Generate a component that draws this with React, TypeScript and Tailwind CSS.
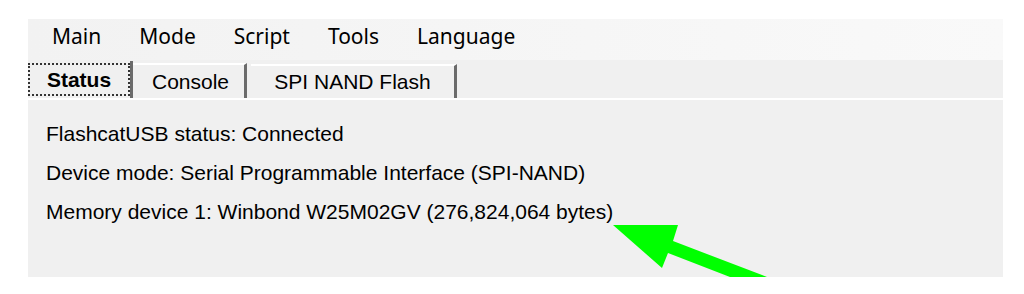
import React from 'react';

const menuItems = ['Main', 'Mode', 'Script', 'Tools', 'Language'];

const statusLines = [
  'FlashcatUSB status: Connected',
  'Device mode: Serial Programmable Interface (SPI-NAND)',
  'Memory device 1: Winbond W25M02GV (276,824,064 bytes)',
];

export default function App() {
  return (
    <div className="relative w-[1024px] h-[294px] bg-white overflow-hidden">
      <div className="ml-[28px] mt-[19px] w-[975px] h-[258px] flex flex-col bg-[#f0f0f0]">
        {/* menu strip */}
        <div className="h-[41px] flex items-center pl-[24px] pb-[6px] gap-[38px] bg-gradient-to-r from-[#f2f2f2] to-[#f9f9f9] text-[21px] text-black font-['Noto_Sans',sans-serif]">
          {menuItems.map((item) => (
            <span key={item} className="leading-none">{item}</span>
          ))}
        </div>

        {/* tab buttons */}
        <div className="h-[38px] flex items-end font-['Liberation_Sans',Arial,sans-serif] text-[21px] text-black">
          <div className="h-[37px] w-[105px] flex items-center justify-center border-r-[3px] border-[#6b6b6b]">
            <div className="h-[33px] w-[102px] flex items-center justify-center border-2 border-dotted border-[#333] font-bold">
              Status
            </div>
          </div>
          <div className="h-[35px] w-[114px] flex items-center justify-center pl-[4px] border-t-2 border-white border-r-[3px] border-r-[#6b6b6b]">
            Console
          </div>
          <div className="ml-[4px] h-[34px] w-[206px] flex items-center justify-center border-t-2 border-white border-r-[3px] border-r-[#6b6b6b]">
            SPI NAND Flash
          </div>
        </div>
        <div className="h-[3px] border-t-2 border-white" />

        {/* status text */}
        <div className="flex-1 pl-[18px] pt-[21px] flex flex-col gap-[16px] font-['Liberation_Sans',Arial,sans-serif] text-[21px] text-black">
          {statusLines.map((line) => (
            <div key={line} className="leading-[23px]">{line}</div>
          ))}
        </div>
      </div>

      {/* annotation arrow */}
      <svg className="absolute left-0 top-0" width="1024" height="294">
        <polygon
          points="613,225 678,225 673,241 767,277 730,277 668,253 662,268"
          fill="#00ff00"
        />
      </svg>
    </div>
  );
}
